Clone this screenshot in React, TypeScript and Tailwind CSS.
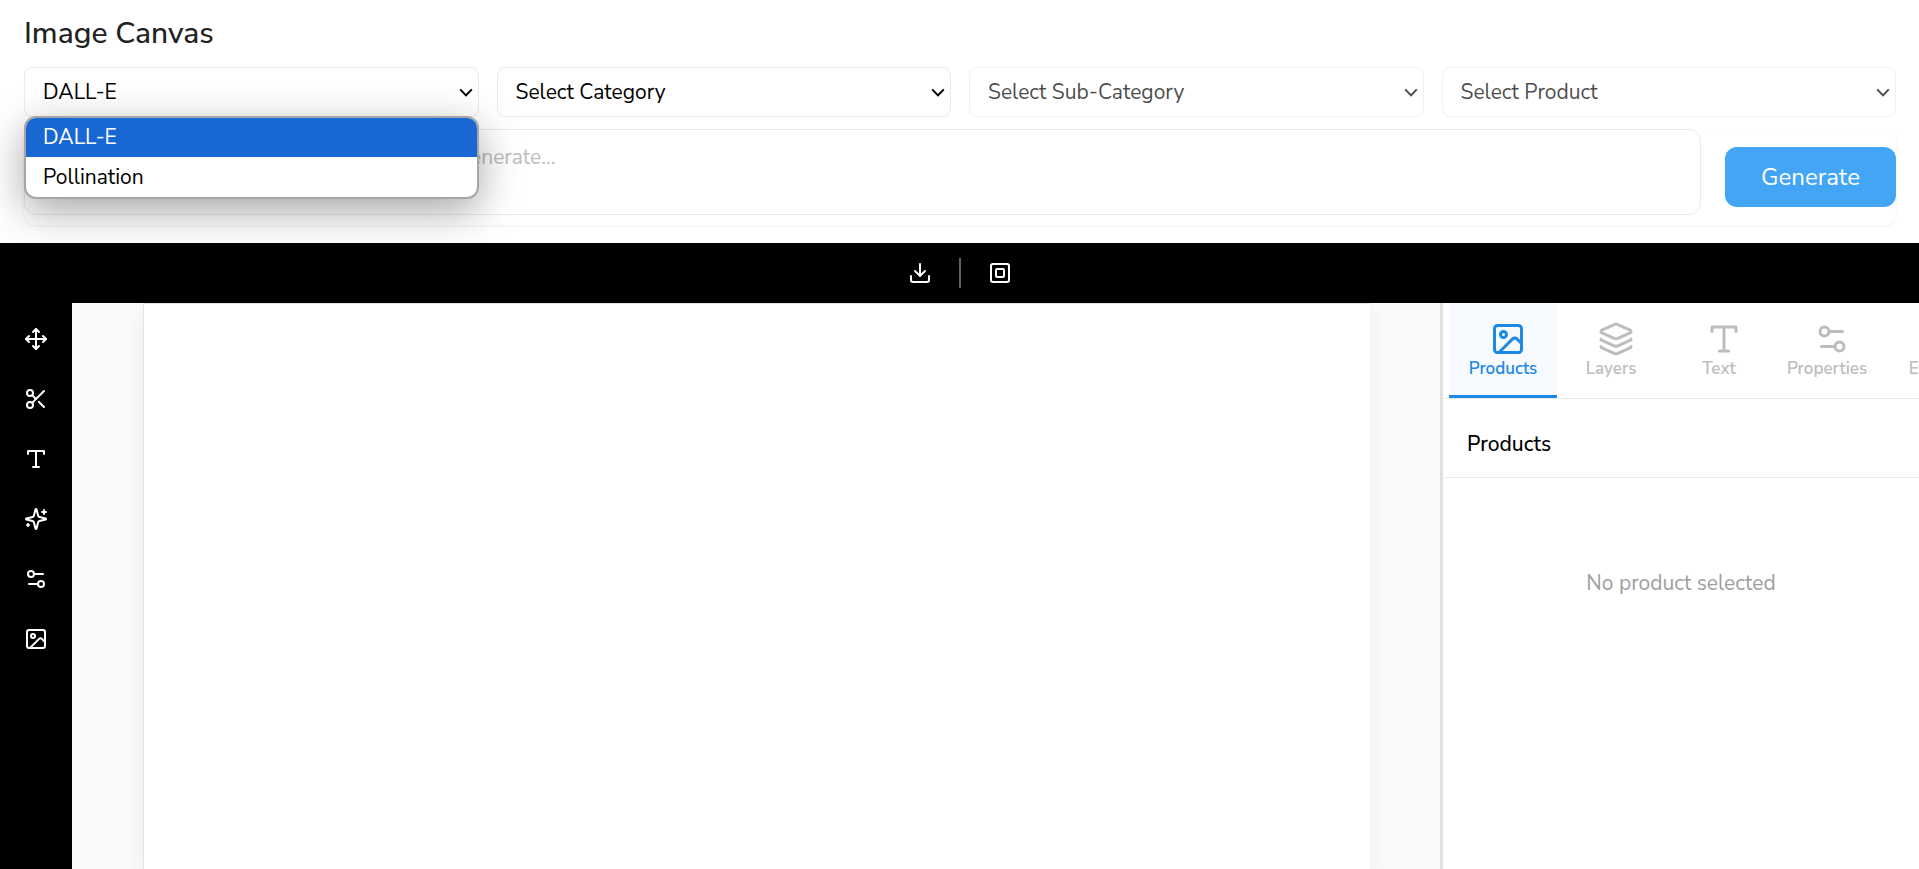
import React, { useState } from "react";
import { Download, Image, Layers, Move, Scissors, Settings2, SquareSquare } from "lucide-react";

type IconProps = { className?: string };

function TypeIcon({ className }: IconProps) {
  return (
    <svg
      aria-hidden="true"
      viewBox="0 0 24 24"
      fill="none"
      stroke="currentColor"
      strokeWidth="2"
      strokeLinecap="round"
      strokeLinejoin="round"
      className={className}
    >
      <path d="M4 7V4h16v3" />
      <path d="M9 20h6" />
      <path d="M12 4v16" />
    </svg>
  );
}

function SparklesIcon({ className }: IconProps) {
  return (
    <svg
      aria-hidden="true"
      viewBox="0 0 24 24"
      fill="none"
      stroke="currentColor"
      strokeWidth="2"
      strokeLinecap="round"
      strokeLinejoin="round"
      className={className}
    >
      <path d="M9.937 15.5A2 2 0 0 0 8.5 14.063l-6.135-1.582a.5.5 0 0 1 0-.962L8.5 9.936A2 2 0 0 0 9.937 8.5l1.582-6.135a.5.5 0 0 1 .963 0L14.063 8.5A2 2 0 0 0 15.5 9.937l6.135 1.581a.5.5 0 0 1 0 .964L15.5 14.063a2 2 0 0 0-1.437 1.437l-1.582 6.135a.5.5 0 0 1-.963 0z" />
      <path d="M20 3v4" />
      <path d="M22 5h-4" />
      <path d="M4 17v2" />
      <path d="M5 18H3" />
    </svg>
  );
}

const tools = [
  { label: "Move", Icon: Move },
  { label: "Cut", Icon: Scissors },
  { label: "Text", Icon: TypeIcon },
  { label: "Effects", Icon: SparklesIcon },
  { label: "Properties", Icon: Settings2 },
  { label: "Image", Icon: Image },
];

const tabs = [
  { label: "Products", Icon: Image },
  { label: "Layers", Icon: Layers },
  { label: "Text", Icon: TypeIcon },
  { label: "Properties", Icon: Settings2 },
  { label: "Effects", Icon: SparklesIcon },
];

const models = ["DALL-E", "Pollination"];

type PickerProps = {
  label: string;
  options: string[];
  disabled?: boolean;
  children?: React.ReactNode;
};

function Picker({ label, options, disabled, children }: PickerProps) {
  return (
    <div className={disabled ? "relative opacity-70" : "relative"}>
      <select
        aria-label={label}
        disabled={disabled}
        className="block h-[50px] w-full appearance-none rounded-lg border border-[#ebebeb] bg-white px-[18px] pt-[2px] text-[21px] text-black opacity-100 outline-none"
      >
        {options.map((option) => (
          <option key={option}>{option}</option>
        ))}
      </select>
      <svg
        aria-hidden="true"
        viewBox="0 0 14 9"
        className="pointer-events-none absolute top-[21px] right-[6px] h-[9px] w-[14px] fill-none stroke-black stroke-2"
      >
        <path d="M1.2 1.4 7 7.4l5.8-6" />
      </svg>
      {children}
    </div>
  );
}

export default function App() {
  const [model, setModel] = useState(models[0]);
  const [activeTab, setActiveTab] = useState("Products");

  return (
    <div className="flex h-screen flex-col overflow-hidden bg-white font-['Nunito_Sans',Nunito,Lato,sans-serif] text-[21px] text-black">
      <header className="pt-4 pr-[23px] pb-[18px] pl-6">
        <h1 className="text-[30px] leading-9 font-medium text-[#212121]">Image Canvas</h1>
        <div className="mt-[15px] grid grid-cols-4 gap-[18px]">
          <Picker label="Model" options={models}>
            <ul
              role="listbox"
              aria-label="Model options"
              className="absolute top-[49px] right-0 left-0 z-10 flex flex-col gap-px overflow-hidden rounded-xl border-2 border-[#a6a6a6] bg-white shadow-[0_12px_40px_rgba(0,0,0,0.35)]"
            >
              {models.map((name) => (
                <li
                  key={name}
                  role="option"
                  aria-selected={name === model}
                  onClick={() => setModel(name)}
                  className="h-[39px] px-[17px] leading-[39px] aria-selected:bg-[#1967d2] aria-selected:text-white"
                >
                  {name}
                </li>
              ))}
            </ul>
          </Picker>
          <Picker label="Category" options={["Select Category"]} />
          <Picker label="Sub-category" options={["Select Sub-Category"]} disabled />
          <Picker label="Product" options={["Select Product"]} disabled />
        </div>
        <form
          className="mt-3 flex items-center gap-6 rounded-xl pb-[10px] shadow-[0_1px_3px_rgba(0,0,0,0.06)]"
          onSubmit={(e) => e.preventDefault()}
        >
          <textarea
            aria-label="Prompt"
            placeholder="Describe the design image that you want to generate..."
            className="block h-[86px] min-w-0 grow resize-none rounded-xl border border-[#ebebeb] bg-white px-[18px] py-3 outline-none placeholder:text-[#bdbdbd]"
          />
          <button type="submit" className="mt-[10px] h-[60px] w-[171px] rounded-xl bg-[#42a5f5] text-2xl text-white">
            Generate
          </button>
        </form>
      </header>

      <div className="flex h-[60px] shrink-0 items-center justify-center bg-black text-white">
        <button type="button" aria-label="Download" className="px-[27px]">
          <Download className="size-6" />
        </button>
        <span className="h-[30px] w-[2px] bg-[#616161]" />
        <button type="button" aria-label="Fit to frame" className="px-[27px]">
          <SquareSquare className="size-6" />
        </button>
      </div>

      <div className="flex min-h-0 grow">
        <nav aria-label="Tools" className="flex w-[72px] shrink-0 flex-col items-center bg-black pt-[6px] text-white">
          {tools.map(({ label, Icon }) => (
            <button key={label} type="button" aria-label={label} className="flex size-[60px] items-center justify-center">
              <Icon className="size-6" />
            </button>
          ))}
        </nav>
        <main className="min-w-0 grow overflow-hidden bg-[#fafafa] pr-[70px] pl-[71px]">
          <div className="h-full border-t border-l border-[#e0e3ee] bg-white shadow-[0_6px_18px_rgba(0,0,0,0.06)]" />
        </main>
        <aside className="w-[479px] shrink-0 overflow-hidden border-l-[3px] border-[#e0e0e0] bg-white">
          <div role="tablist" className="flex border-b border-[#ebebeb] pl-[6px]">
            {tabs.map(({ label, Icon }) => (
              <button
                key={label}
                type="button"
                role="tab"
                aria-selected={label === activeTab}
                onClick={() => setActiveTab(label)}
                className="flex h-[95px] w-[108px] shrink-0 flex-col items-center border-b-[3px] border-transparent pt-[18px] text-[#bdbdbd] aria-selected:border-[#1e88e5] aria-selected:bg-[#f7fbff] aria-selected:text-[#1e88e5]"
              >
                <Icon className="ml-[9px] size-9" />
                <span className="text-[17px] leading-6 font-semibold">{label}</span>
              </button>
            ))}
          </div>
          <h2 className="h-[79px] border-b border-[#ebebeb] px-6 pt-[29px] leading-8 font-medium">{activeTab}</h2>
          <p className="py-[89px] text-center leading-8 text-[#9e9e9e]">No product selected</p>
        </aside>
      </div>
    </div>
  );
}
